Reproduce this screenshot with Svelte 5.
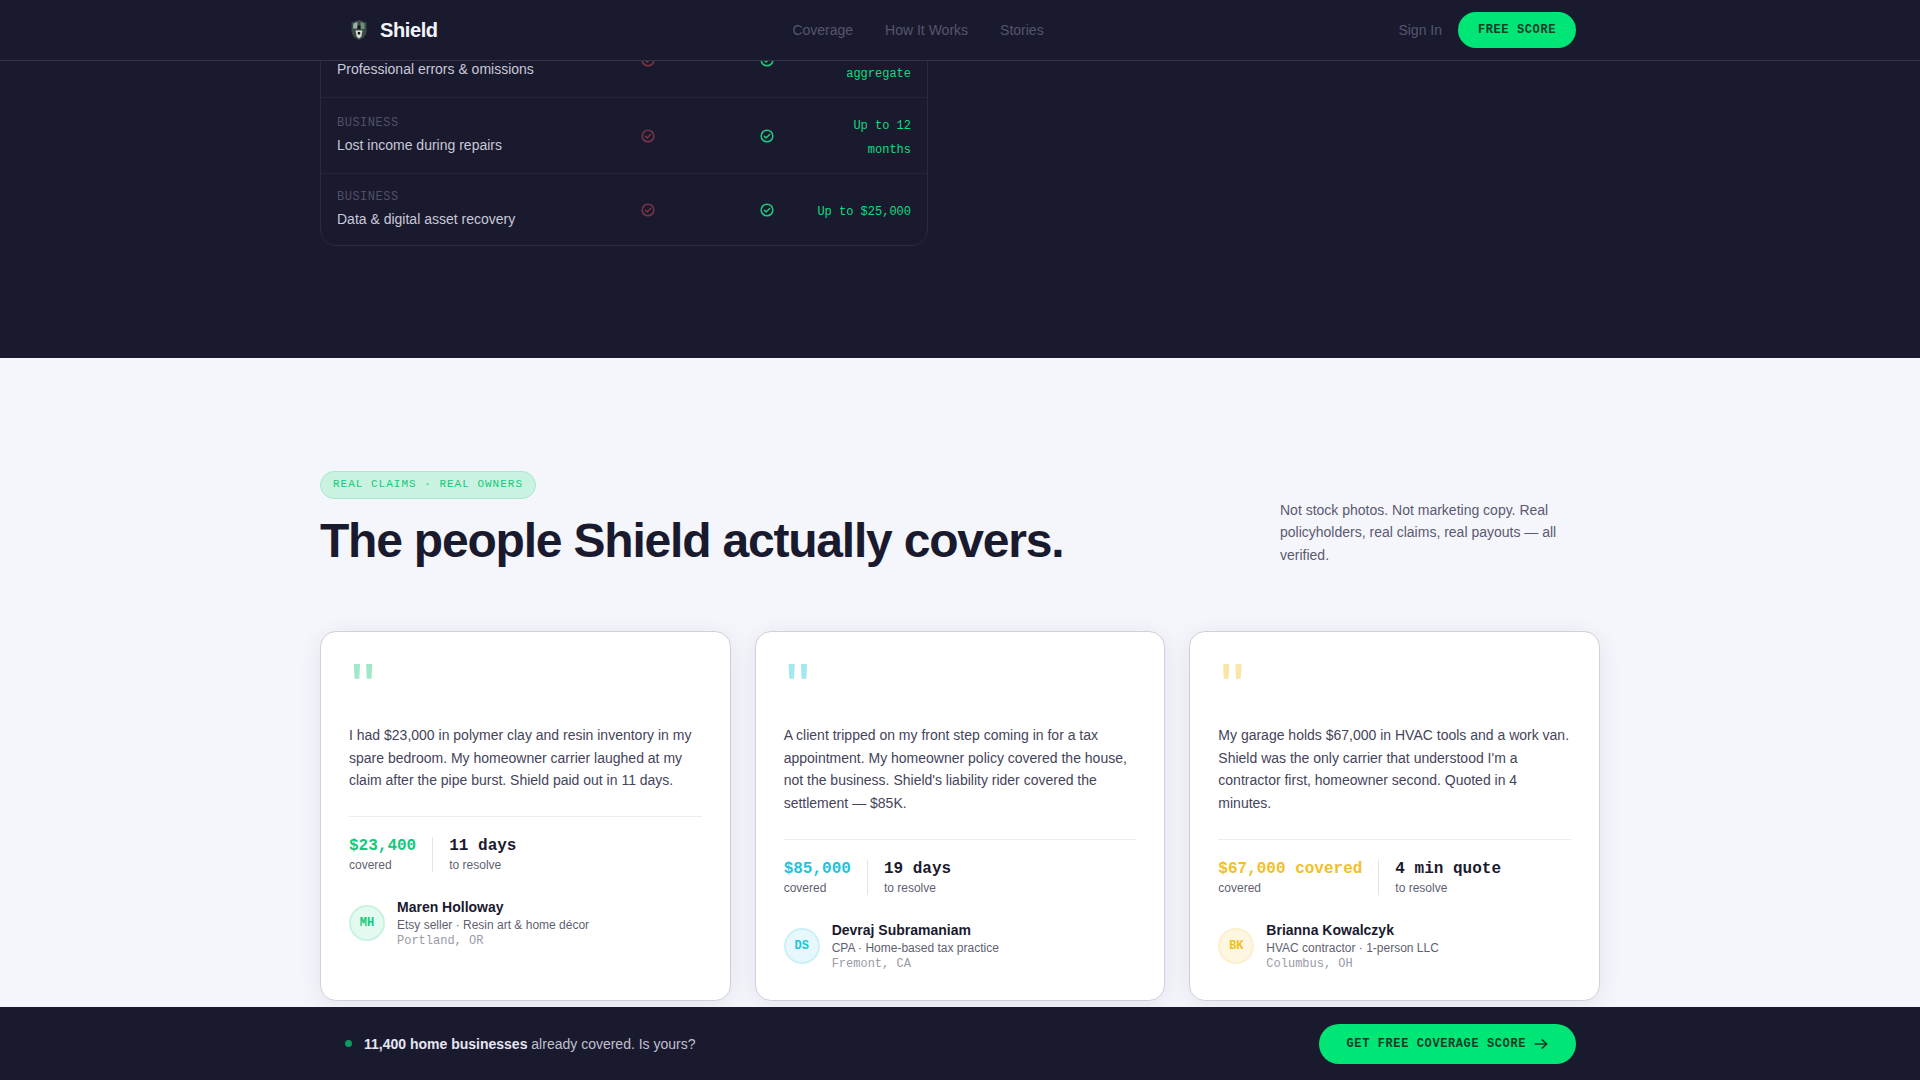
<script>
	const rows = [
		{ cat: 'BUSINESS', name: 'Professional errors & omissions', value: '$1M per aggregate' },
		{ cat: 'BUSINESS', name: 'Lost income during repairs', value: 'Up to 12 months' },
		{ cat: 'BUSINESS', name: 'Data & digital asset recovery', value: 'Up to $25,000' }
	];

	const stories = [
		{
			quote: 'I had $23,000 in polymer clay and resin inventory in my spare bedroom. My homeowner carrier laughed at my claim after the pipe burst. Shield paid out in 11 days.',
			amount: '$23,400',
			time: '11 days',
			initials: 'MH',
			name: 'Maren Holloway',
			role: 'Etsy seller · Resin art & home décor',
			place: 'Portland, OR',
			tone: 'green'
		},
		{
			quote: "A client tripped on my front step coming in for a tax appointment. My homeowner policy covered the house, not the business. Shield's liability rider covered the settlement — $85K.",
			amount: '$85,000',
			time: '19 days',
			initials: 'DS',
			name: 'Devraj Subramaniam',
			role: 'CPA · Home-based tax practice',
			place: 'Fremont, CA',
			tone: 'cyan'
		},
		{
			quote: "My garage holds $67,000 in HVAC tools and a work van. Shield was the only carrier that understood I'm a contractor first, homeowner second. Quoted in 4 minutes.",
			amount: '$67,000 covered',
			time: '4 min quote',
			initials: 'BK',
			name: 'Brianna Kowalczyk',
			role: 'HVAC contractor · 1-person LLC',
			place: 'Columbus, OH',
			tone: 'amber'
		}
	];
</script>

{#snippet check()}
	<svg viewBox="0 0 24 24" width="14" height="14" fill="none" stroke="currentColor" stroke-width="2.6" stroke-linecap="round" stroke-linejoin="round">
		<circle cx="12" cy="12" r="10" />
		<path d="M7.500 12.500l3 2.800L16.500 9.500" />
	</svg>
{/snippet}

<header class="nav">
	<div class="nav-inner">
		<a class="brand" href="#top">
			<svg viewBox="0 0 18 22" width="18" height="22">
				<path d="M9 1l7.500 2.500v8c0 4.500-3 7.800-7.500 9.500-4.500-1.700-7.500-5-7.500-9.500v-8z" fill="#3b4a43" />
				<path d="M3.500 4.500L7.500 3v6.500H3z" fill="#9db3a5" />
				<path d="M10.500 3l4 1.500V10h-4z" fill="#6c9079" />
				<path d="M5.500 11.500h7l-1.200 6L9 19.500l-2.300-2z" fill="#d5dfd7" />
				<path d="M7.500 6.500h3v3.500h-3zM7.800 13h2.400v2.500H7.800z" fill="#12161f" />
			</svg>
			<span>Shield</span>
		</a>
		<nav class="links">
			<a href="#coverage">Coverage</a>
			<a href="#how">How It Works</a>
			<a href="#stories">Stories</a>
		</nav>
		<div class="nav-actions">
			<a class="signin" href="#signin">Sign In</a>
			<button class="btn small">FREE SCORE</button>
		</div>
	</div>
</header>

<section class="dark">
	<div class="table">
		{#each rows as row}
			<div class="row">
				<div class="feature">
					<span class="cat">{row.cat}</span>
					<span class="name">{row.name}</span>
				</div>
				<span class="no">{@render check()}</span>
				<span class="yes">{@render check()}</span>
				<span class="value">{row.value}</span>
			</div>
		{/each}
	</div>
</section>

<section class="light">
	<div class="head">
		<div>
			<span class="pill">REAL CLAIMS · REAL OWNERS</span>
			<h2>The people Shield actually covers.</h2>
		</div>
		<p>Not stock photos. Not marketing copy. Real policyholders, real claims, real payouts — all verified.</p>
	</div>
	<div class="cards">
		{#each stories as s}
			<article class="card {s.tone}">
				<div class="mark">"</div>
				<p class="quote">{s.quote}</p>
				<div class="stats">
					<div class="stat">
						<strong class="amount">{s.amount}</strong>
						<span>covered</span>
					</div>
					<div class="stat">
						<strong>{s.time}</strong>
						<span>to resolve</span>
					</div>
				</div>
				<div class="person">
					<div class="avatar">{s.initials}</div>
					<div class="who">
						<b>{s.name}</b>
						<span>{s.role}</span>
						<em>{s.place}</em>
					</div>
				</div>
			</article>
		{/each}
	</div>
</section>

<footer class="bar">
	<div class="bar-inner">
		<div class="bar-text">
			<i class="dot"></i>
			<span><b>11,400 home businesses</b> already covered. Is yours?</span>
		</div>
		<button class="btn large">
			GET FREE COVERAGE SCORE
			<svg viewBox="0 0 24 24" width="14" height="14" fill="none" stroke="currentColor" stroke-width="2.8" stroke-linecap="round" stroke-linejoin="round">
				<path d="M2 12h20M14 5l8 7-8 7" />
			</svg>
		</button>
	</div>
</footer>

<style>
	:global(body) {
		margin: 0;
		height: 1080px;
		overflow: hidden;
		background: #f5f5fc;
		font-family: 'Liberation Sans', Arial, sans-serif;
		color: #1a1a2e;
	}

	a {
		text-decoration: none;
		color: inherit;
	}

	.nav {
		position: fixed;
		top: 0;
		left: 0;
		right: 0;
		z-index: 5;
		height: 60px;
		background: #1a1a2e;
		border-bottom: 1px solid #33334a;
	}
	.nav-inner {
		max-width: 1232px;
		height: 100%;
		margin: 0 auto;
		display: flex;
		align-items: center;
		justify-content: space-between;
	}
	.brand {
		display: flex;
		align-items: center;
		gap: 12px;
		font-size: 20px;
		font-weight: 700;
		letter-spacing: -0.4px;
		color: #f4f4fb;
		padding-left: 6px;
	}
	.links {
		display: flex;
		gap: 32px;
		font-size: 14px;
		color: #55556e;
	}
	.nav-actions {
		display: flex;
		align-items: center;
		gap: 16px;
	}
	.signin {
		font-size: 14px;
		color: #55556e;
	}

	.btn {
		display: inline-flex;
		align-items: center;
		justify-content: center;
		gap: 8px;
		border: none;
		border-radius: 100px;
		background: #00e676;
		color: #0f3d2a;
		font-family: 'Liberation Mono', monospace;
		font-weight: 700;
		font-size: 12px;
		letter-spacing: 0.6px;
	}
	.btn.small {
		width: 118px;
		height: 36px;
	}
	.btn.large {
		height: 40px;
		padding: 0 28px;
	}

	.dark {
		height: 358px;
		background: #1a1a2e;
		overflow: hidden;
		display: flex;
		flex-direction: column;
		justify-content: flex-end;
		padding-bottom: 112px;
		box-sizing: border-box;
	}
	.table {
		width: 608px;
		margin-left: 320px;
		box-sizing: border-box;
		border: 1px solid #2a2a40;
		border-radius: 16px;
		flex-shrink: 0;
	}
	.row {
		display: grid;
		grid-template-columns: 1fr 148px 89px 100px;
		align-items: center;
		padding: 14px 16px;
		border-top: 1px solid #25253a;
	}
	.row:first-child {
		border-top: none;
	}
	.row:last-child {
		padding-top: 15px;
		padding-bottom: 15px;
	}
	.feature {
		display: flex;
		flex-direction: column;
		gap: 3px;
	}
	.cat {
		font-family: 'Liberation Mono', monospace;
		font-size: 12px;
		line-height: 16px;
		letter-spacing: 0.5px;
		color: #50506a;
	}
	.name {
		font-size: 14px;
		line-height: 22px;
		color: #c8c8d8;
	}
	.no,
	.yes {
		display: flex;
		justify-content: center;
	}
	.no {
		color: #7a3446;
	}
	.yes {
		color: #1fc97f;
	}
	.value {
		font-family: 'Liberation Mono', monospace;
		font-size: 12px;
		line-height: 24px;
		color: #10dc80;
		text-align: right;
		margin: 2px 0 -3px -8px;
	}

	.light {
		padding: 113px 320px 0;
		background: #f5f5fc;
	}
	.head {
		display: flex;
		justify-content: space-between;
		align-items: flex-end;
		margin-bottom: 63px;
	}
	.pill {
		display: inline-block;
		padding: 6px 12px 8px;
		border: 1px solid #a8ead0;
		border-radius: 100px;
		background: #c9f2e0;
		color: #12c97a;
		font-family: 'Liberation Mono', monospace;
		font-size: 11px;
		letter-spacing: 1px;
	}
	h2 {
		margin: 14px 0 0;
		font-size: 48px;
		line-height: 1.15;
		letter-spacing: -1.2px;
		font-weight: 700;
		color: #1a1a2e;
	}
	.head p {
		width: 320px;
		margin: 0 0 2px;
		font-size: 14px;
		line-height: 22.4px;
		color: #5a5a70;
	}

	.cards {
		display: grid;
		grid-template-columns: repeat(3, 1fr);
		gap: 24px;
		align-items: stretch;
	}
	.card {
		height: 370px;
		box-sizing: border-box;
		padding: 28px;
		background: #fff;
		border: 1px solid #d0d0d8;
		border-radius: 16px;
		box-shadow: 0 4px 24px rgba(26, 26, 46, 0.08);
	}
	.mark {
		height: 64px;
		padding-left: 2px;
		font-family: 'Liberation Sans', sans-serif;
		font-size: 68px;
		line-height: 54px;
		opacity: 0.4;
	}
	.quote {
		margin: 0 0 24px;
		font-size: 14px;
		line-height: 22.6px;
		color: #44445a;
	}
	.stats {
		display: flex;
		padding-top: 20px;
		border-top: 1px solid #ececf2;
		margin-bottom: 27px;
	}
	.stat {
		display: flex;
		flex-direction: column;
		gap: 3px;
		padding-right: 16px;
		margin-right: 16px;
		border-right: 1px solid #e4e4ea;
	}
	.stat:last-child {
		border-right: none;
	}
	.stat strong {
		font-family: 'Liberation Mono', monospace;
		font-size: 16px;
		color: #1a1a2e;
	}
	.stat span {
		font-size: 12px;
		color: #5f5f72;
	}
	.person {
		display: flex;
		align-items: center;
		gap: 12px;
	}
	.avatar {
		width: 36px;
		height: 36px;
		border-radius: 50%;
		box-sizing: border-box;
		display: flex;
		align-items: center;
		justify-content: center;
		font-family: 'Liberation Mono', monospace;
		font-weight: 700;
		font-size: 12px;
	}
	.who {
		display: flex;
		flex-direction: column;
		gap: 2px;
	}
	.who b {
		font-size: 14px;
		margin-bottom: 1px;
		color: #1a1a2e;
	}
	.who span {
		font-size: 12px;
		color: #5f5f72;
	}
	.who em {
		font-style: normal;
		font-family: 'Liberation Mono', monospace;
		font-size: 12px;
		color: #9a9aa8;
	}

	.green .mark,
	.green .amount,
	.green .avatar {
		color: #12c97a;
	}
	.green .avatar {
		background: #e4faf0;
		border: 2px solid #c9f2e0;
	}
	.cyan .mark,
	.cyan .amount,
	.cyan .avatar {
		color: #1cc4dc;
	}
	.cyan .avatar {
		background: #e6f8fb;
		border: 2px solid #cdf0f6;
	}
	.amber .mark,
	.amber .amount,
	.amber .avatar {
		color: #f2c022;
	}
	.amber .avatar {
		background: #fdf7e2;
		border: 2px solid #faf0cf;
	}

	.bar {
		position: fixed;
		left: 0;
		right: 0;
		bottom: 0;
		z-index: 5;
		height: 73px;
		background: #1a1a2e;
	}
	.bar-inner {
		max-width: 1232px;
		height: 100%;
		margin: 0 auto;
		display: flex;
		align-items: center;
		justify-content: space-between;
	}
	.bar-text {
		display: flex;
		align-items: center;
		gap: 12px;
		font-size: 14px;
		color: #c0c0d0;
		padding-left: 1px;
	}
	.bar-text b {
		color: #e6e6f2;
	}
	.dot {
		width: 7px;
		height: 7px;
		border-radius: 50%;
		background: #0f9a60;
	}
</style>
